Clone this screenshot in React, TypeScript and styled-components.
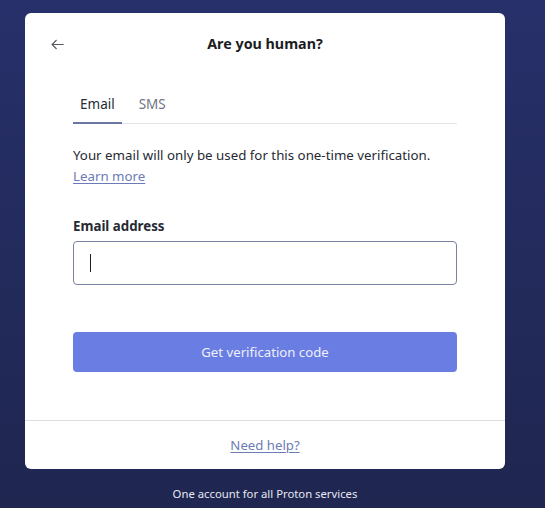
import React from "react";
import styled, { createGlobalStyle } from "styled-components";

const Global = createGlobalStyle`
  html, body { margin: 0; padding: 0; }
  body {
    background: linear-gradient(180deg, #27306a 0%, #222a5a 60%, #1f2650 100%);
    min-height: 508px;
    font-family: "Noto Sans", "Open Sans", sans-serif;
    color: #262a33;
  }
`;

const Page = styled.div`
  display: flex;
  flex-direction: column;
  align-items: flex-start;
  padding: 13px 0 0 25px;
  width: 520px;
  height: 495px;
`;

const Card = styled.div`
  width: 480px;
  height: 456px;
  background: #ffffff;
  border-radius: 6px;
  display: flex;
  flex-direction: column;
`;

const Body = styled.div`
  flex: 1;
  padding: 20px 48px 0;
  display: flex;
  flex-direction: column;
`;

const Header = styled.div`
  position: relative;
  height: 22px;
  display: flex;
  align-items: center;
  justify-content: center;
`;

const BackButton = styled.button`
  position: absolute;
  left: -24px;
  top: 3px;
  width: 16px;
  height: 16px;
  padding: 0;
  border: none;
  background: none;
  display: flex;
  align-items: center;
  justify-content: center;
  color: #55595f;
`;

const Title = styled.h1`
  margin: 0;
  font-size: 14.3px;
  font-weight: 700;
  line-height: 22px;
  color: #1b1d22;
`;

const Tabs = styled.div`
  margin-top: 39px;
  display: flex;
  gap: 10px;
  border-bottom: 1px solid #e3e4e8;
`;

const Tab = styled.div<{ $active?: boolean }>`
  padding: 0 7px 8px;
  font-size: 13.5px;
  line-height: 20px;
  color: ${(p) => (p.$active ? "#262a33" : "#6f7480")};
  border-bottom: 2px solid ${(p) => (p.$active ? "#6b76a3" : "transparent")};
  margin-bottom: -1px;
`;

const Info = styled.p`
  margin: 21px 0 0;
  font-size: 13.3px;
  line-height: 21px;
  color: #262a33;
`;

const Link = styled.a`
  color: #6d7bb8;
  text-decoration: underline;
  text-underline-offset: 2px;
`;

const Label = styled.label`
  margin-top: 29px;
  font-size: 13.3px;
  font-weight: 700;
  line-height: 20px;
  color: #262a33;
`;

const InputBox = styled.div`
  margin-top: 5px;
  height: 44px;
  box-sizing: border-box;
  border: 1px solid #7b81a0;
  border-radius: 4px;
  display: flex;
  align-items: center;
  padding-left: 16px;
`;

const Caret = styled.span`
  width: 1px;
  height: 18px;
  background: #1b1d22;
`;

const Submit = styled.button`
  margin-top: 47px;
  height: 40px;
  border: none;
  border-radius: 4px;
  background: #6a7de3;
  color: #eef0fb;
  font-family: inherit;
  font-size: 13.2px;
`;

const Footer = styled.div`
  height: 48px;
  border-top: 1px solid #dcdde1;
  display: flex;
  align-items: center;
  justify-content: center;
  font-size: 13.2px;
`;

const Tagline = styled.div`
  width: 480px;
  margin-top: 17px;
  text-align: center;
  font-size: 11.3px;
  color: #e6e8f2;
`;

export default function App() {
  return (
    <>
      <Global />
      <Page>
        <Card>
          <Body>
            <Header>
              <BackButton aria-label="Back">
                <svg width="15" height="15" viewBox="0 0 16 16" fill="none">
                  <path d="M14.5 8H2.5M7 3.2L2.2 8 7 12.8" stroke="currentColor" strokeWidth="1.2" />
                </svg>
              </BackButton>
              <Title>Are you human?</Title>
            </Header>
            <Tabs>
              <Tab $active>Email</Tab>
              <Tab>SMS</Tab>
            </Tabs>
            <Info>
              Your email will only be used for this one-time verification.
              <br />
              <Link href="#">Learn more</Link>
            </Info>
            <Label>Email address</Label>
            <InputBox>
              <Caret />
            </InputBox>
            <Submit>Get verification code</Submit>
          </Body>
          <Footer>
            <Link href="#">Need help?</Link>
          </Footer>
        </Card>
        <Tagline>One account for all Proton services</Tagline>
      </Page>
    </>
  );
}
